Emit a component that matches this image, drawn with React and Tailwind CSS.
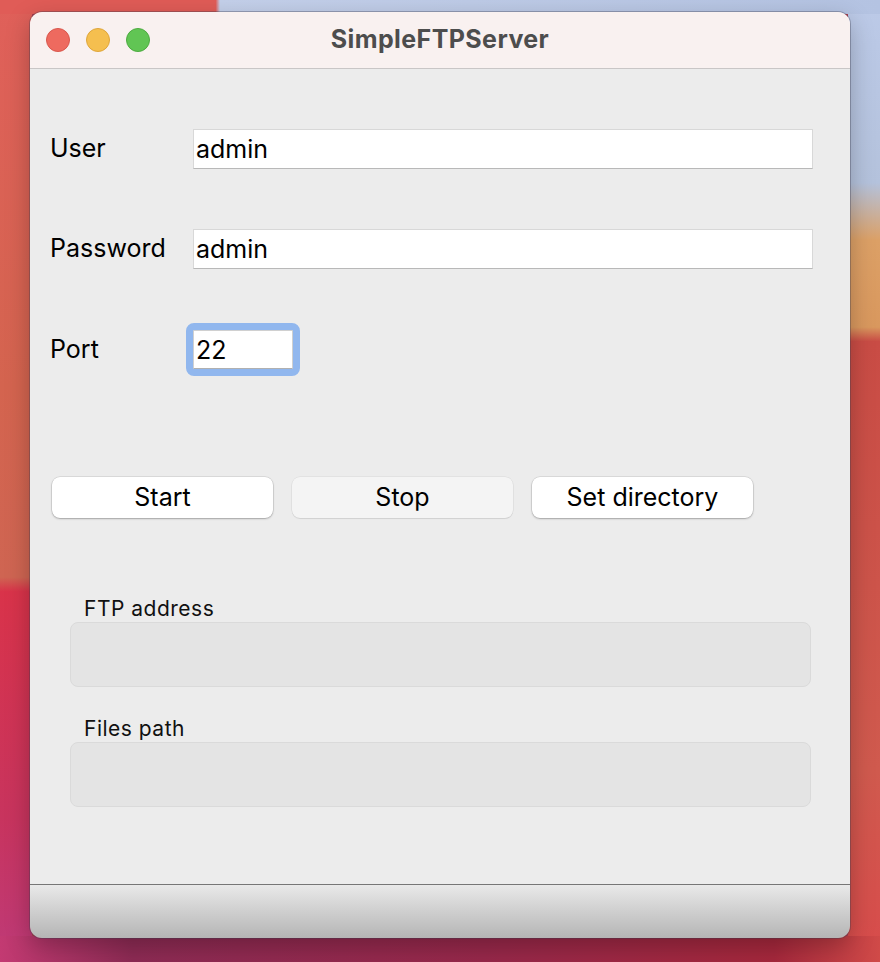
import React from 'react';

const Field = ({ label, value }) => (
    <div className="flex items-center h-[40px]">
        <span className="w-[143px] text-[25px] text-black">{label}</span>
        <input
            readOnly
            value={value}
            className="w-[620px] h-[40px] bg-white border border-[#d8d8d8] border-b-[#b8b8b8] pl-[2px] text-[25px] text-black outline-none"
        />
    </div>
);

const Output = ({ label, first }) => (
    <div className={first ? 'mt-[78px]' : 'mt-[29px]'}>
        <div className="ml-[34px] h-[26px] leading-[26px] text-[21px] text-[#111] tracking-[0.5px]">{label}</div>
        <div className="ml-[20px] w-[741px] h-[65px] rounded-[8px] bg-[#e4e4e4] border border-[#dadada]" />
    </div>
);

const Button = ({ children, muted }) => (
    <button
        className={
            muted
                ? 'w-[221px] h-[41px] rounded-[8px] bg-[#f4f4f4] text-[25px] text-black shadow-[0_0_0_0.5px_rgba(0,0,0,0.08),0_1px_1px_rgba(0,0,0,0.08)]'
                : 'w-[221px] h-[41px] rounded-[8px] bg-white text-[25px] text-black shadow-[0_0_0_0.5px_rgba(0,0,0,0.14),0_1px_2px_rgba(0,0,0,0.25)]'
        }
    >
        {children}
    </button>
);

export default function App() {
    return (
        <div className="w-[880px] h-[962px] pt-[12px] pl-[30px] font-['Inter','Liberation_Sans',sans-serif] [background:linear-gradient(90deg,#e05c57_0_24.5%,#c4d0ea_25%,#b4c3e2_100%)_top/100%_14px_no-repeat,linear-gradient(90deg,#c33a72,#8d2b54_15%,#97284a_55%,#a5283c_88%,#d04a48)_bottom/100%_26px_no-repeat,linear-gradient(180deg,#e0605a,#d4644f_40%,#cf6552_60%,#d9334a_61.5%,#c8345e_85%,#be3a78)_left/32px_100%_no-repeat,linear-gradient(180deg,#bccae8,#b4c2dc_19%,#dca066_25%,#d9985e_34%,#c94c45_35.5%,#d05a4e_80%,#d84b4b)_right/32px_100%_no-repeat,#b04050]">
            <div className="w-[820px] h-[926px] rounded-[12px] overflow-hidden flex flex-col shadow-[0_0_0_1px_rgba(60,60,80,0.35),0_8px_24px_rgba(0,0,0,0.25)]">
                {/* title bar */}
                <div className="h-[57px] shrink-0 grid grid-cols-[1fr_auto_1fr] items-center bg-[#f9f1f0] border-b border-[#c9c6c6]">
                    <div className="flex items-center gap-[16px] pl-[16px]">
                        <span className="w-[24px] h-[24px] rounded-full bg-[#ee6a5f] border border-[#d9574d]" />
                        <span className="w-[24px] h-[24px] rounded-full bg-[#f5bf4f] border border-[#dfa63b]" />
                        <span className="w-[24px] h-[24px] rounded-full bg-[#61c554] border border-[#4dab40]" />
                    </div>
                    <h1 className="text-[25px] font-bold text-[#4d4d4d] tracking-[0.4px]">SimpleFTPServer</h1>
                    <div />
                </div>

                <main className="flex-1 bg-[#ececec] pt-[60px] pl-[20px]">
                    <Field label="User" value="admin" />
                    <div className="mt-[60px]">
                        <Field label="Password" value="admin" />
                    </div>
                    <div className="mt-[61px] flex items-center h-[39px]">
                        <span className="w-[143px] text-[25px] text-black">Port</span>
                        <input
                            readOnly
                            value="22"
                            className="w-[100px] h-[39px] bg-white border border-[#d0d0d0] border-b-[#b0b0b0] rounded-[1px] pl-[2px] text-[25px] text-black outline-[7px] outline-solid outline-[#91b7ee]"
                        />
                    </div>

                    <div className="mt-[108px] ml-[2px] flex gap-[19px]">
                        <Button>Start</Button>
                        <Button muted>Stop</Button>
                        <Button>Set directory</Button>
                    </div>

                    <Output label="FTP address" first />
                    <Output label="Files path" />
                </main>

                <div className="h-[54px] shrink-0 border-t border-[#767676] bg-gradient-to-b from-[#e9e9e9] to-[#b5b5b5]" />
            </div>
        </div>
    );
}
